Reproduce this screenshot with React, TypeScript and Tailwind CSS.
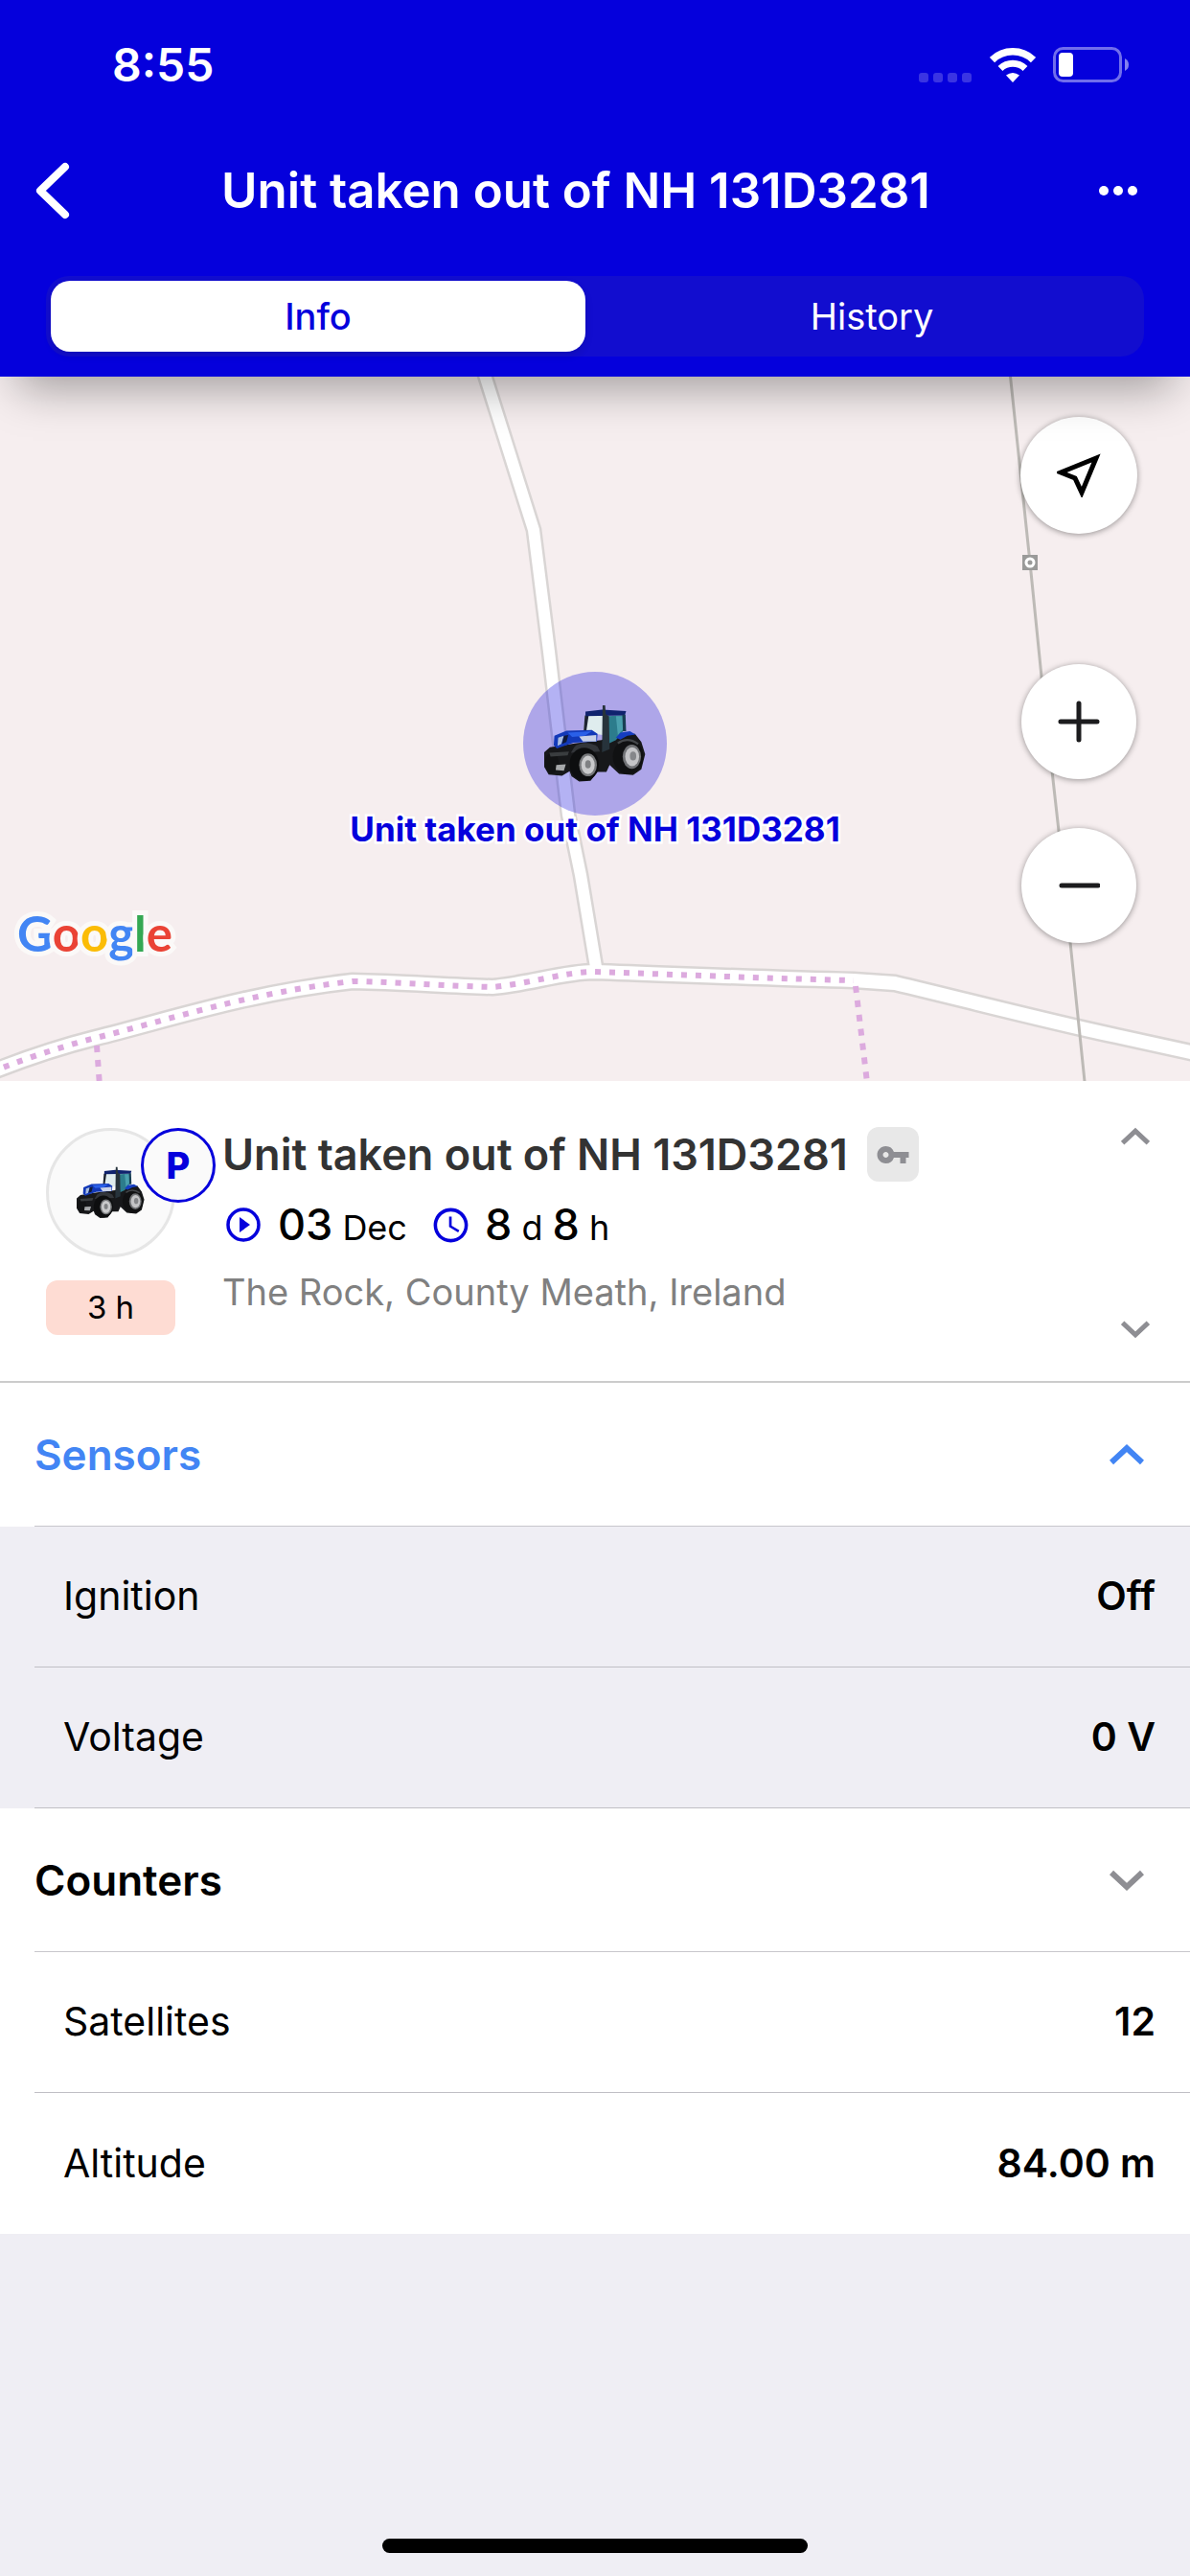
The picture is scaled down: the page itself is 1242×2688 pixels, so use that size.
import { useState } from "react";
import clsx from "clsx";
import { MdAccessTime, MdVpnKey } from "react-icons/md";

const UNIT_NAME = "Unit taken out of NH 131D3281";

const MAIN_ROAD =
  "M-10 726 C20 714 60 700 100 690 C180 670 260 643 368 631 C420 632 470 636 514 637 C550 634 590 621 620 621 C710 624 800 628 891 630 L934 633 C1010 651 1090 672 1165 688 L1252 707";
const SIDE_ROAD = "M505 -5 L557 160 L573 287 L593 457 L606 520 L622 616";
const FOOTPATH =
  "M-10 726 C20 714 60 700 100 690 C180 670 260 643 368 631 C420 632 470 636 514 637 C550 634 590 621 620 621 C710 624 800 628 891 630";

const sensors = [
  { label: "Ignition", value: "Off" },
  { label: "Voltage", value: "0 V" },
];

const details = [
  { label: "Satellites", value: "12" },
  { label: "Altitude", value: "84.00 m" },
];

interface IChevronProps {
  direction: "up" | "down";
  className?: string;
}

const Chevron = ({ direction, className }: IChevronProps) => (
  <svg
    viewBox="0 0 36 24"
    className={className}
    fill="none"
    stroke="currentColor"
    strokeWidth="6"
    aria-hidden="true"
  >
    <path d={direction === "up" ? "M2 20 L18 5 L34 20" : "M2 4 L18 19 L34 4"} />
  </svg>
);

const Tractor = ({ className }: { className?: string }) => (
  <svg viewBox="0 0 320 246" className={className} aria-hidden="true">
    <path
      d="M0 150 L18 134 L60 128 L96 122 L180 112 L226 94 L286 92 L306 118 L318 156 L306 204 L280 222 L236 218 L206 190 L196 212 L168 212 L146 240 L110 242 L86 226 L80 210 L56 224 L14 220 L0 196Z"
      fill="#17181a"
    />
    <path d="M128 34 L184 34 L184 96 L124 86Z" fill="#dfecee" />
    <path d="M128 34 L140 34 L132 88 L124 86Z" fill="#1d2330" />
    <path d="M198 36 L250 34 L254 78 L226 112 L204 122Z" fill="#2c7c8c" />
    <path d="M226 36 L250 36 L250 76 L232 96Z" fill="#4aa0ae" />
    <path d="M130 22 L182 16 L258 20 L254 34 L130 36Z" fill="#10236e" />
    <path d="M246 32 L256 32 L258 84 L248 84Z" fill="#183f54" />
    <path d="M184 2 L192 2 L194 30 L204 36 L206 140 L182 150Z" fill="#27333b" />
    <path d="M32 98 L70 82 L150 80 L168 92 L166 116 L92 120 L40 138 L30 128Z" fill="#1239b8" />
    <path d="M74 88 L150 84 L128 98 L88 102Z" fill="#2a60e8" />
    <path d="M110 100 L164 96 L164 116 L122 116Z" fill="#c9d2e8" />
    <path d="M44 104 L62 98 L54 124 L42 130Z" fill="#a9bde0" />
    <path d="M62 98 L76 96 L70 118 L56 124Z" fill="#101a38" />
    <path d="M226 104 L240 88 L270 84 L288 94 L262 98 L240 110Z" fill="#153dc0" />
    <path d="M96 132 Q128 110 168 132 L176 148 L84 152Z" fill="#33363a" />
    <ellipse cx="126" cy="188" rx="46" ry="52" fill="#0d0e0f" />
    <ellipse cx="138" cy="190" rx="28" ry="36" fill="#77797b" />
    <ellipse cx="138" cy="190" rx="21" ry="29" fill="#c9cacb" />
    <ellipse cx="138" cy="188" rx="9" ry="13" fill="#7f8183" />
    <ellipse cx="264" cy="164" rx="48" ry="55" fill="#101112" />
    <ellipse cx="276" cy="164" rx="29" ry="38" fill="#707275" />
    <ellipse cx="277" cy="164" rx="22" ry="30" fill="#c4c5c7" />
    <ellipse cx="280" cy="162" rx="10" ry="14" fill="#85878a" />
    <path d="M232 122 Q262 100 296 124" fill="none" stroke="#44474a" strokeWidth="7" />
    <ellipse cx="24" cy="184" rx="22" ry="32" fill="#121314" />
    <path d="M38 190 L68 188 L62 208 L36 206Z" fill="#a7a9ab" />
    <path d="M16 152 L78 148 L74 160 L20 164Z" fill="#3a3d3f" />
  </svg>
);

const StatusBar = () => (
  <div className="flex h-[134px] items-center justify-between pt-[2px] pr-[63px] pl-[117px]">
    <span className="text-[48px] font-semibold">8:55</span>
    <div className="flex items-center">
      <svg viewBox="0 0 56 38" className="mr-[18px] h-[38px] w-[56px]" fill="#3a34e3" aria-hidden="true">
        <rect x="0" y="27" width="10" height="10" rx="3" />
        <rect x="15" y="27" width="10" height="10" rx="3" />
        <rect x="30" y="27" width="10" height="10" rx="3" />
        <rect x="45" y="27" width="10" height="10" rx="3" />
      </svg>
      <svg viewBox="0 0 48 38" className="mr-[18px] h-[38px] w-[48px]" fill="none" aria-hidden="true">
        <path d="M2.500 13.500 A31 31 0 0 1 45.500 13.500" stroke="white" strokeWidth="7.500" />
        <path d="M11 22.500 A19 19 0 0 1 37 22.500" stroke="white" strokeWidth="7" />
        <path d="M24 37 L17 29.500 Q24 24.500 31 29.500Z" fill="white" />
      </svg>
      <svg viewBox="0 0 80 38" className="h-[38px] w-[80px]" aria-hidden="true">
        <rect x="1.500" y="1.500" width="69" height="34" rx="9" fill="none" stroke="#716eec" strokeWidth="3" />
        <rect x="6" y="6" width="15" height="25" rx="4" fill="white" />
        <path d="M75 12 Q79 14 79 18.500 Q79 23 75 25Z" fill="#8380ef" />
      </svg>
    </div>
  </div>
);

const tabs = ["Info", "History"];

const Header = () => {
  const [activeTab, setActiveTab] = useState("Info");

  return (
    <header className="relative z-10 bg-[#0500dc] pb-[21px] text-white shadow-[0_30px_45px_-18px_rgba(0,0,0,0.35)]">
      <StatusBar />
      <div className="flex h-[130px] items-center">
        <button type="button" aria-label="Back" className="w-[110px] pl-9">
          <svg
            viewBox="0 0 38 60"
            className="h-[60px] w-[38px]"
            fill="none"
            stroke="currentColor"
            strokeWidth="8"
            strokeLinecap="round"
            strokeLinejoin="round"
          >
            <path d="M32 5 L6 30 L32 55" />
          </svg>
        </button>
        <h1 className="flex-1 text-center text-[51px] font-semibold">{UNIT_NAME}</h1>
        <button type="button" aria-label="More" className="flex w-[150px] justify-end gap-[5px] pr-[55px]">
          <span className="size-[10px] rounded-full bg-white" />
          <span className="size-[10px] rounded-full bg-white" />
          <span className="size-[10px] rounded-full bg-white" />
        </button>
      </div>
      <div role="tablist" className="mx-12 mt-6 flex h-[84px] gap-5 rounded-3xl bg-[#120dcf] p-[5px]">
        {tabs.map(tab => (
          <button
            key={tab}
            type="button"
            role="tab"
            aria-selected={tab === activeTab}
            onClick={() => setActiveTab(tab)}
            className={clsx(
              "flex-1 rounded-[20px] text-[38px]",
              tab === activeTab
                ? "bg-white font-medium text-[#0500dc] shadow-[0_4px_8px_rgba(0,0,0,0.12)]"
                : "text-white",
            )}
          >
            {tab}
          </button>
        ))}
      </div>
    </header>
  );
};

const UnitMap = () => (
  <section aria-label="Map" className="relative h-[735px] overflow-hidden bg-[#f6eeef]">
    <svg
      viewBox="0 0 1242 735"
      preserveAspectRatio="xMidYMid slice"
      className="h-full w-full"
      fill="none"
      aria-hidden="true"
    >
      <path d={MAIN_ROAD} stroke="#d9d5d4" strokeWidth="19" />
      <path d={SIDE_ROAD} stroke="#d9d5d4" strokeWidth="17" />
      <path d={MAIN_ROAD} stroke="#fff" strokeWidth="14" />
      <path d={SIDE_ROAD} stroke="#fff" strokeWidth="12" />
      <path d={FOOTPATH} stroke="#dcaade" strokeWidth="6" strokeDasharray="6 9" />
      <path d="M101 698 L104 740" stroke="#dcaade" strokeWidth="6" strokeDasharray="7 8" />
      <path d="M893 636 L906 745" stroke="#dcaade" strokeWidth="6" strokeDasharray="7 8" />
      <path d="M1054 -5 L1075 194 L1087 313 L1105 474 L1133 745" stroke="#bdbab6" strokeWidth="3" />
      <rect x="1067" y="186" width="16" height="16" fill="#9a9a99" />
      <circle cx="1075" cy="194" r="4" stroke="#fff" strokeWidth="3" />
    </svg>

    <div className="absolute inset-x-0 top-[308px] flex flex-col items-center">
      <div className="flex size-[150px] items-center justify-center rounded-full bg-[#0500dc]/30">
        <Tractor className="h-[82px] w-[106px]" />
      </div>
      <p className="text-[35px] leading-[28px] font-bold text-[#0500dc] [paint-order:stroke_fill] [-webkit-text-stroke:5px_white]">
        {UNIT_NAME}
      </p>
    </div>

    <a
      href="#google"
      aria-label="Google"
      className="absolute bottom-[120px] left-[18px] font-[Lato,sans-serif] text-[51px] leading-[68px] font-bold [paint-order:stroke_fill] [-webkit-text-stroke:10px_#fbf9f8]"
    >
      <span className="text-[#4285f4]">G</span>
      <span className="text-[#ea4335]">o</span>
      <span className="text-[#fbbc05]">o</span>
      <span className="text-[#4285f4]">g</span>
      <span className="text-[#34a853]">l</span>
      <span className="text-[#ea4335]">e</span>
    </a>

    <div className="absolute top-[42px] right-[55px] flex flex-col">
      <button
        type="button"
        aria-label="My location"
        className="flex size-[122px] items-center justify-center rounded-full bg-white shadow-[0_1px_6px_rgba(0,0,0,0.4)]"
      >
        <svg viewBox="0 0 46 46" className="size-[46px]" fill="none" stroke="black" strokeWidth="5">
          <path d="M41 5 L4 20 L19 26 L26 41Z" />
        </svg>
      </button>
      <button
        type="button"
        aria-label="Zoom in"
        className="mt-[136px] flex size-[120px] items-center justify-center self-center rounded-full bg-white shadow-[0_1px_6px_rgba(0,0,0,0.4)]"
      >
        <svg viewBox="0 0 44 44" className="size-[44px]" stroke="#1c1c1e" strokeWidth="5" strokeLinecap="round">
          <path d="M3 22 H41 M22 3 V41" />
        </svg>
      </button>
      <button
        type="button"
        aria-label="Zoom out"
        className="mt-[51px] flex size-[120px] items-center justify-center self-center rounded-full bg-white shadow-[0_1px_6px_rgba(0,0,0,0.4)]"
      >
        <svg viewBox="0 0 44 44" className="size-[44px]" stroke="#1c1c1e" strokeWidth="5" strokeLinecap="round">
          <path d="M4 22 H42" />
        </svg>
      </button>
    </div>
  </section>
);

const UnitSummary = () => (
  <section className="flex border-b-2 border-[#cccccc] bg-white pt-12 pr-10 pb-11 pl-12">
    <div className="w-[184px] shrink-0 pb-1">
      <div className="relative mt-[1px] flex size-[135px] items-center justify-center rounded-full border-3 border-[#e6e6e6] bg-[#fafafa]">
        <Tractor className="h-[55px] w-[71px]" />
        <span className="absolute -top-[3px] -right-[45px] flex size-[78px] items-center justify-center rounded-full border-3 border-[#0500dc] bg-[#fafafa] text-[38px] font-extrabold text-[#0500dc]">
          P
        </span>
      </div>
      <p className="mt-6 flex h-[57px] w-[135px] items-center justify-center rounded-xl bg-[#fedcd3] text-[33px]">
        3 h
      </p>
    </div>

    <div className="flex-1">
      <div className="flex items-center gap-5">
        <h2 className="text-[45px] leading-[57px] font-semibold text-[#333333]">{UNIT_NAME}</h2>
        <span className="flex h-[57px] w-[54px] items-center justify-center rounded-xl bg-[#e8e8e8]">
          <MdVpnKey className="size-9 text-[#8e8e93]" />
        </span>
      </div>
      <div className="mt-4 flex h-[58px] items-center pl-1">
        <svg viewBox="0 0 36 36" className="mr-[18px] size-9" fill="none" aria-hidden="true">
          <circle cx="18" cy="18" r="16" stroke="#0500dc" strokeWidth="3.500" />
          <path d="M14 10 L25 18 L14 26Z" fill="#0500dc" />
        </svg>
        <p className="text-[36px]">
          <span className="text-[45px] font-medium">03</span> Dec
        </p>
        <MdAccessTime className="mr-[14px] ml-6 size-[43px] text-[#0500dc]" />
        <p className="text-[36px]">
          <span className="text-[45px] font-medium">8</span> d{" "}
          <span className="text-[45px] font-medium">8</span> h
        </p>
      </div>
      <p className="mt-[14px] text-[38px] leading-[54px] text-[#808080]">The Rock, County Meath, Ireland</p>
    </div>

    <div className="flex w-[34px] flex-col items-center justify-between text-[#8e8e93]">
      <button type="button" aria-label="Previous unit">
        <Chevron direction="up" className="h-5 w-[30px]" />
      </button>
      <button type="button" aria-label="Next unit">
        <Chevron direction="down" className="h-5 w-[30px]" />
      </button>
    </div>
  </section>
);

interface ISectionToggleProps {
  title: string;
  open: boolean;
  onToggle: () => void;
}

const SectionToggle = ({ title, open, onToggle }: ISectionToggleProps) => (
  <div className="bg-white pl-9">
    <button
      type="button"
      aria-expanded={open}
      onClick={onToggle}
      className={clsx(
        "flex h-[150px] w-full items-center justify-between border-b border-[#c8c7cc] pr-12 text-[44px] font-semibold",
        open ? "text-[#4285f4]" : "text-black",
      )}
    >
      {title}
      <Chevron
        direction={open ? "up" : "down"}
        className={clsx("h-6 w-9", open ? "text-[#4285f4]" : "text-[#8e8e93]")}
      />
    </button>
  </div>
);

interface IDetailRowProps {
  label: string;
  value: string;
  divider?: boolean;
}

const DetailRow = ({ label, value, divider = true }: IDetailRowProps) => (
  <div className="pl-9">
    <div
      className={clsx(
        "flex h-[147px] items-center justify-between pr-9 pl-[30px] text-[41px]",
        divider && "border-b border-[#c0bfc5]",
      )}
    >
      <dt>{label}</dt>
      <dd className="font-semibold">{value}</dd>
    </div>
  </div>
);

const App = () => {
  const [sensorsOpen, setSensorsOpen] = useState(true);
  const [countersOpen, setCountersOpen] = useState(false);

  return (
    <div className="flex min-h-screen flex-col bg-[#efeef4] font-[Inter,sans-serif] text-black">
      <Header />
      <main>
        <UnitMap />
        <UnitSummary />
        <SectionToggle title="Sensors" open={sensorsOpen} onToggle={() => setSensorsOpen(!sensorsOpen)} />
        {sensorsOpen && (
          <dl>
            {sensors.map(sensor => (
              <DetailRow key={sensor.label} {...sensor} />
            ))}
          </dl>
        )}
        <SectionToggle title="Counters" open={countersOpen} onToggle={() => setCountersOpen(!countersOpen)} />
        <dl className="bg-white">
          {details.map((detail, index) => (
            <DetailRow key={detail.label} {...detail} divider={index < details.length - 1} />
          ))}
        </dl>
      </main>
      <div className="mt-auto flex justify-center pb-6">
        <div className="h-[15px] w-[444px] rounded-full bg-black" />
      </div>
    </div>
  );
};

export default App;
